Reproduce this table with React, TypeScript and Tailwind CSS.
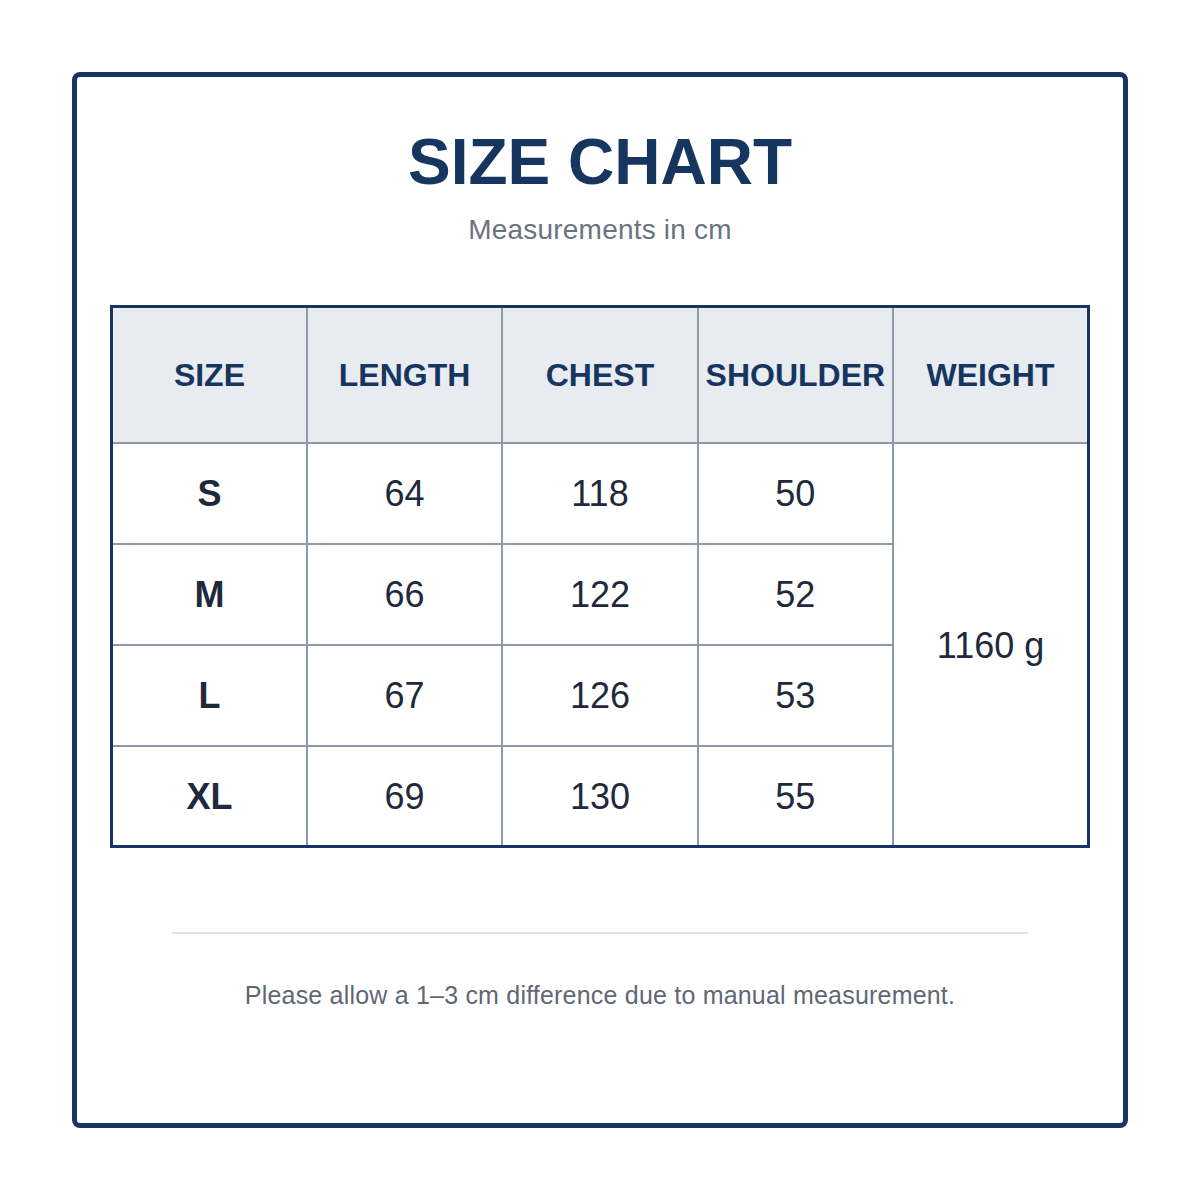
import React from "react";

const rows = [
  { size: "S", length: "64", chest: "118", shoulder: "50" },
  { size: "M", length: "66", chest: "122", shoulder: "52" },
  { size: "L", length: "67", chest: "126", shoulder: "53" },
  { size: "XL", length: "69", chest: "130", shoulder: "55" },
];

const headers = ["SIZE", "LENGTH", "CHEST", "SHOULDER", "WEIGHT"];

export default function App() {
  return (
    <div
      className="w-[1200px] h-[1200px] bg-white p-[72px]"
      style={{ fontFamily: '"Liberation Sans", Arial, sans-serif' }}
    >
      <div className="box-border h-[1056px] w-[1056px] rounded-[8px] border-[5px] border-[#17365f] px-[33px] pt-[53px] flex flex-col items-center">
        <h1 className="text-[64px] leading-none font-bold text-[#17365f] tracking-normal">
          SIZE CHART
        </h1>
        <p className="mt-[22px] text-[28px] leading-none text-[#6b7280] tracking-[0.2px]">
          Measurements in cm
        </p>
        <table className="mt-[61px] w-[980px] table-fixed border-collapse border-[3px] border-[#17365f]">
          <thead>
            <tr className="h-[136px] bg-[#e8ecf1]">
              {headers.map((h) => (
                <th
                  key={h}
                  className="border-2 border-[#8e9aab] border-t-[3px] border-t-[#17365f] p-0 text-[32px] font-bold text-[#17365f] align-middle text-center whitespace-nowrap"
                >
                  {h}
                </th>
              ))}
            </tr>
          </thead>
          <tbody>
            {rows.map((r, i) => (
              <tr key={r.size} className="h-[101px]">
                <td className="border-2 border-[#8e9aab] p-0 pt-[2px] text-center align-middle text-[36px] font-bold text-[#1e293b]">
                  {r.size}
                </td>
                <td className="border-2 border-[#8e9aab] p-0 pt-[2px] text-center align-middle text-[36px] text-[#1e293b]">
                  {r.length}
                </td>
                <td className="border-2 border-[#8e9aab] p-0 pt-[2px] text-center align-middle text-[36px] text-[#1e293b]">
                  {r.chest}
                </td>
                <td className="border-2 border-[#8e9aab] p-0 pt-[2px] text-center align-middle text-[36px] text-[#1e293b]">
                  {r.shoulder}
                </td>
                {i === 0 && (
                  <td
                    rowSpan={4}
                    className="border-2 border-[#8e9aab] p-0 pt-[4px] text-center align-middle text-[36px] text-[#1e293b]"
                  >
                    1160 g
                  </td>
                )}
              </tr>
            ))}
          </tbody>
        </table>
        <div className="mt-[84px] h-[2px] w-[856px] bg-[#e0e4ea]" />
        <p className="mt-[49px] text-[25px] leading-none text-[#5f6776] tracking-[0.2px]">
          Please allow a 1–3 cm difference due to manual measurement.
        </p>
      </div>
    </div>
  );
}
